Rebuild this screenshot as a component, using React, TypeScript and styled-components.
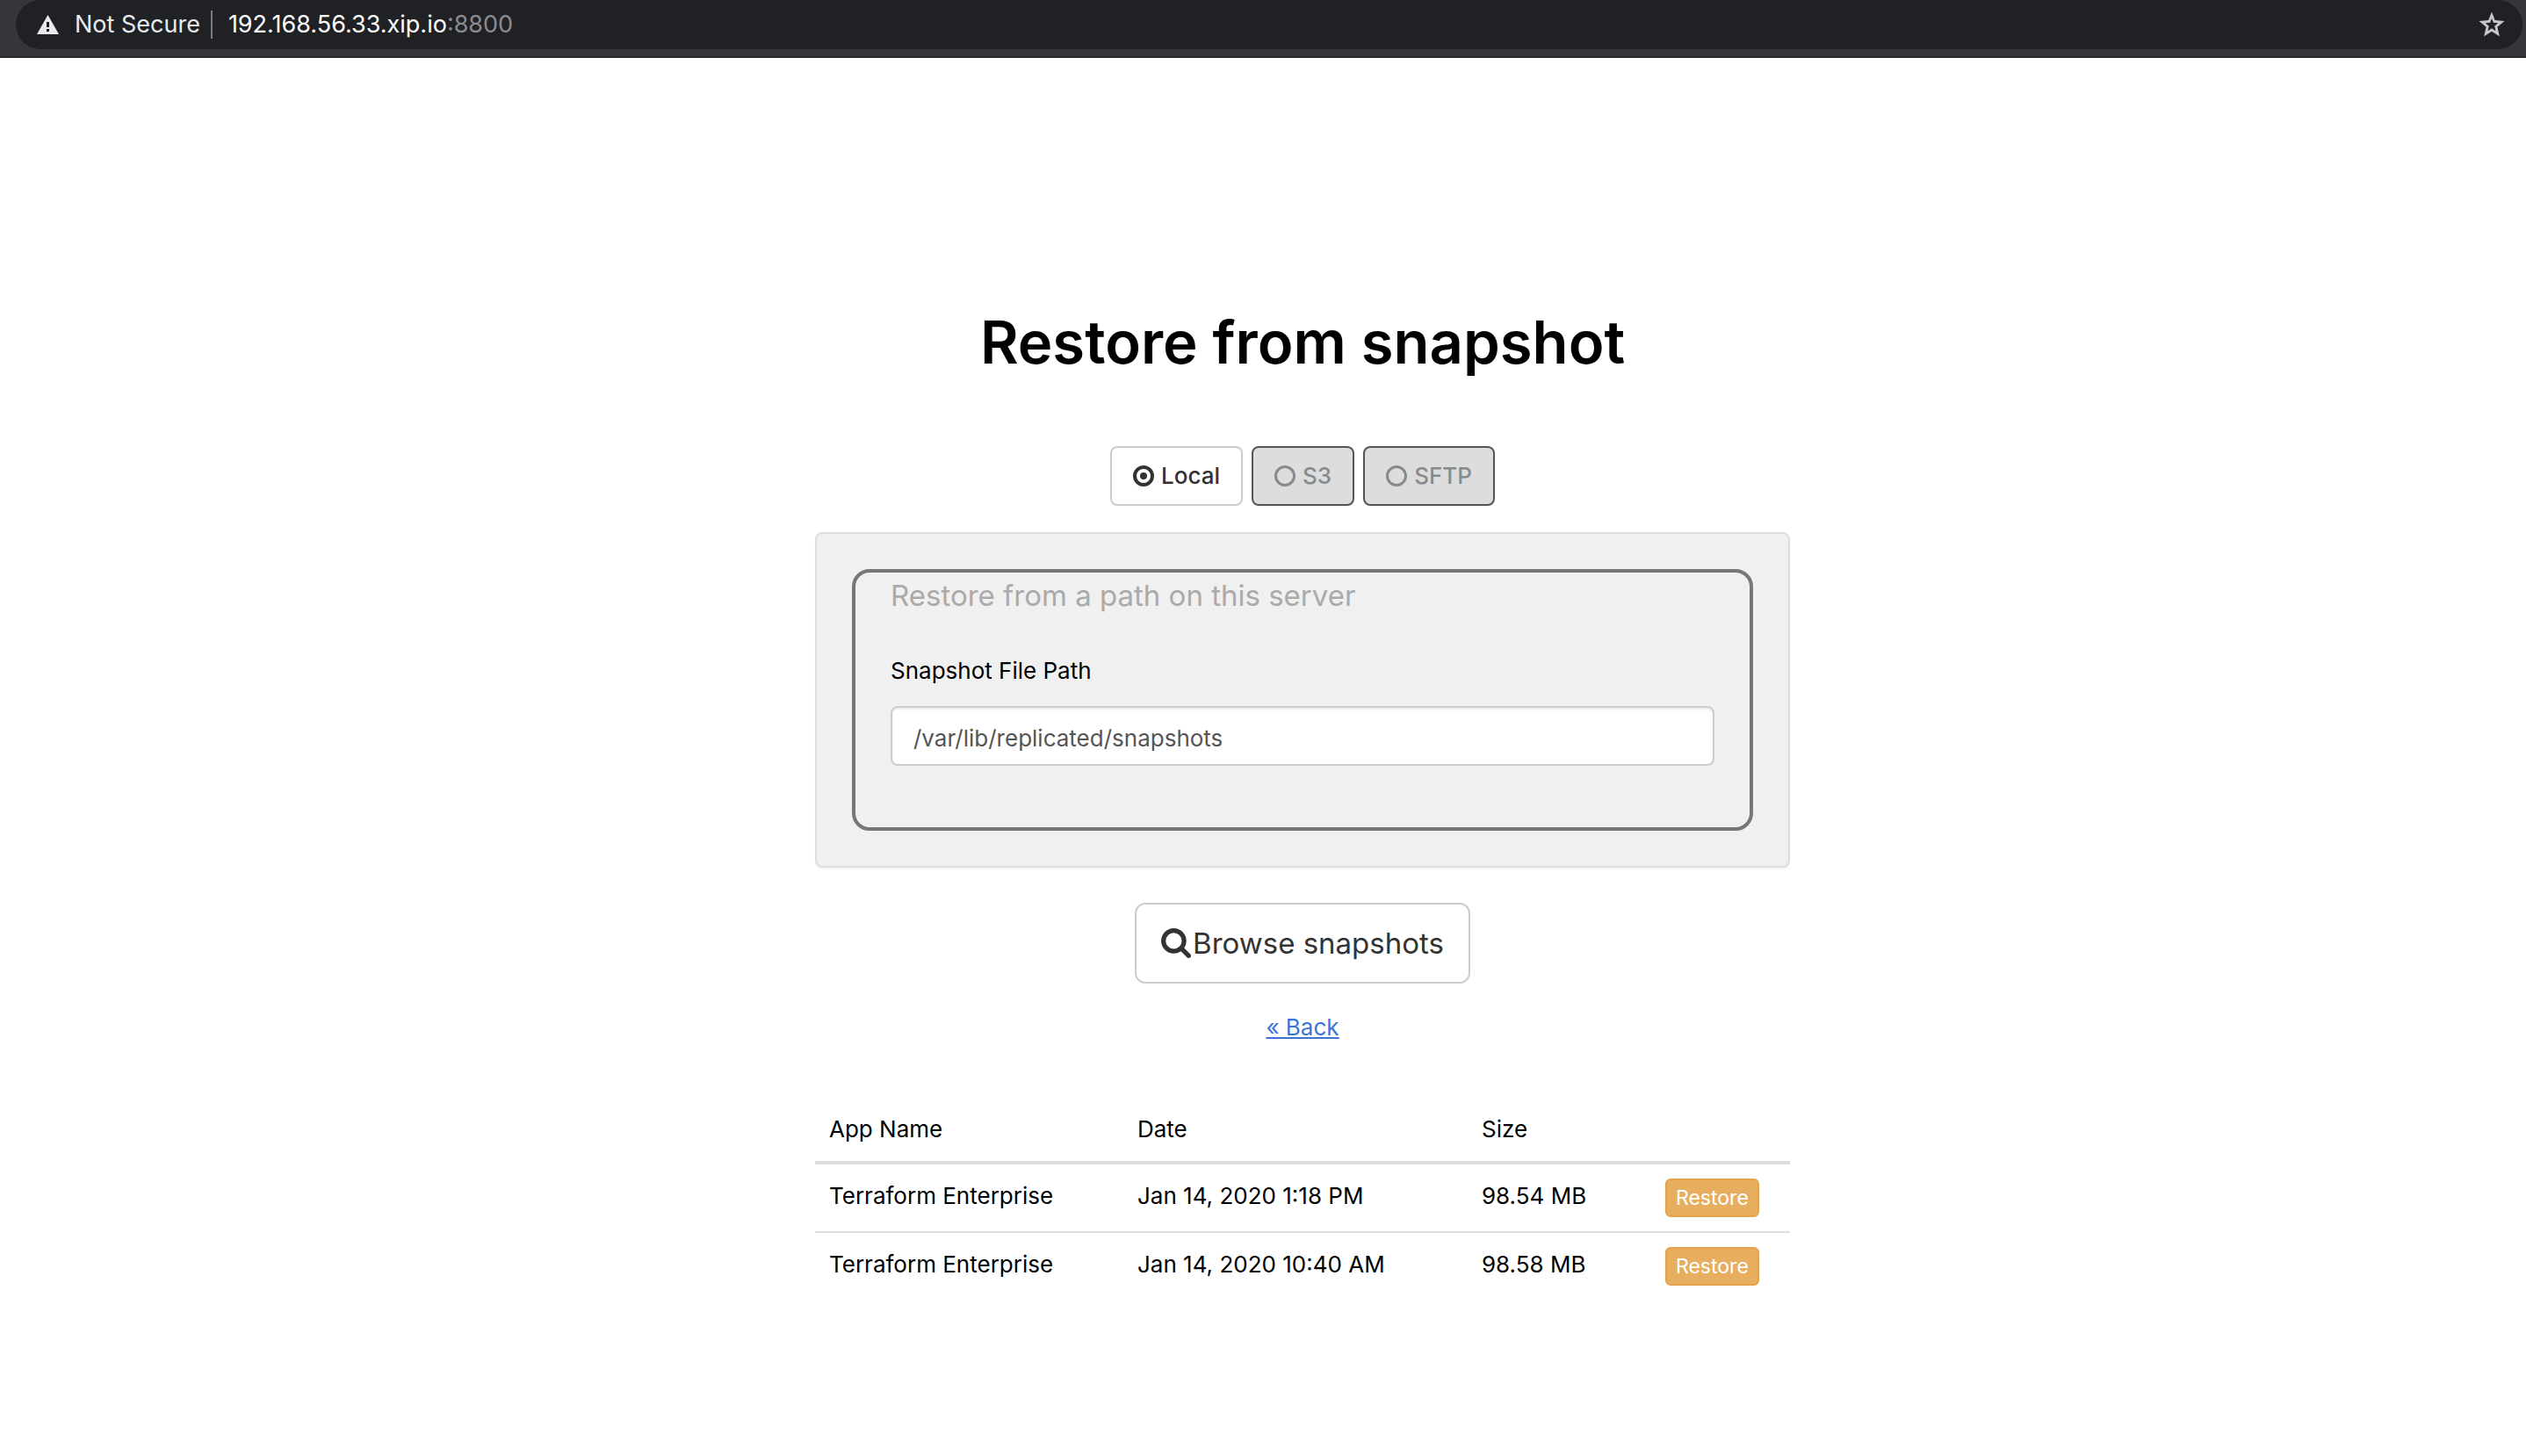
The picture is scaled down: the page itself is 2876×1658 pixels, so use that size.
import React, { useState } from "react";
import styled, { createGlobalStyle } from "styled-components";

const GlobalStyle = createGlobalStyle`
  *, *::before, *::after { box-sizing: border-box; }
  body {
    margin: 0;
    background: #fff;
    color: #000;
    font-family: Inter, "Liberation Sans", sans-serif;
    font-size: 26px;
    line-height: 40px;
  }
  input, button { font: inherit; }
`;

const AddressBar = styled.header`
  display: flex;
  height: 66px;
  padding: 0 4px 8px 18px;
  background: #35363a;
  border-bottom: 2px solid #28292b;
  font-size: 27px;
`;

const Omnibox = styled.div`
  flex: 1;
  display: flex;
  align-items: center;
  padding: 0 20px 0 24px;
  border-radius: 28px;
  background: #202124;
  color: #fff;
`;

const Security = styled.span`
  display: flex;
  align-items: center;
  gap: 18px;
  color: #e8eaed;
`;

const Divider = styled.span`
  width: 2px;
  height: 32px;
  margin: 0 18px 0 12px;
  background: #7b7c7f;
`;

const Port = styled.span`
  color: #8b8c8f;
`;

const StarButton = styled.button`
  display: flex;
  margin-left: auto;
  padding: 0;
  border: 0;
  background: none;
  color: #c6c7c8;
`;

const Main = styled.main`
  display: flex;
  flex-direction: column;
  align-items: center;
  padding: 284px 0 60px 90px;
`;

const Content = styled.div`
  display: flex;
  flex-direction: column;
  align-items: center;
  width: 100%;
  max-width: 1110px;
`;

const Title = styled.h1`
  margin: 0 0 78px;
  font-size: 67px;
  font-weight: 600;
  line-height: 80px;
`;

const Options = styled.div`
  display: flex;
  gap: 10px;
  margin-bottom: 30px;
`;

const Option = styled.label<{ $active: boolean }>`
  display: flex;
  align-items: center;
  gap: 8px;
  height: 68px;
  padding: 0 24px;
  border: 2px solid ${(p) => (p.$active ? "#ccc" : "#555")};
  border-radius: 8px;
  background: ${(p) => (p.$active ? "#fff" : "#ddd")};
  color: ${(p) => (p.$active ? "#333" : "#888b8d")};
  font-weight: 500;
`;

const Radio = styled.input`
  appearance: none;
  display: grid;
  place-items: center;
  width: 24px;
  height: 24px;
  margin: 0;
  border: 3px solid currentColor;
  border-radius: 50%;
  color: inherit;

  &:checked {
    border-width: 4px;
  }

  &:checked::before {
    content: "";
    width: 8px;
    height: 8px;
    border-radius: 50%;
    background: currentColor;
  }
`;

const Well = styled.section`
  width: 100%;
  margin-bottom: 40px;
  padding: 40px;
  border: 2px solid #ddd;
  border-radius: 8px;
  background: #f0f0f0;
  box-shadow: 0 2px 2px rgba(0, 0, 0, 0.05);
`;

const PathGroup = styled.div`
  display: flex;
  flex-direction: column;
  padding: 0 40px 70px;
  border: 4px solid #777;
  border-radius: 20px;
`;

const GroupTitle = styled.h2`
  margin: 0 0 40px;
  color: #aaa;
  font-size: 33px;
  font-weight: 400;
  line-height: 52px;
`;

const FieldLabel = styled.label`
  margin-bottom: 20px;
`;

const PathInput = styled.input`
  width: 100%;
  height: 68px;
  padding: 4px 24px 0;
  border: 2px solid #ccc;
  border-radius: 8px;
  background: #fff;
  box-shadow: inset 0 2px 2px rgba(0, 0, 0, 0.075);
  color: #555;
`;

const BrowseButton = styled.button`
  display: flex;
  align-items: center;
  gap: 2px;
  height: 92px;
  margin-bottom: 30px;
  padding: 0 28px;
  border: 2px solid #ccc;
  border-radius: 12px;
  background: #fff;
  color: #333;
  font-size: 33px;
`;

const BackLink = styled.a`
  margin-bottom: 60px;
  color: #3b73d9;
  text-decoration: underline;
`;

const Table = styled.table`
  width: 100%;
  border-collapse: collapse;
  table-layout: fixed;
`;

const Column = styled.col<{ $width?: number }>`
  width: ${(p) => (p.$width ? `${p.$width}px` : "auto")};
`;

const HeadCell = styled.th`
  padding: 16px;
  text-align: left;
  font-weight: 400;
`;

const Body = styled.tbody`
  border-top: 4px solid #ddd;
`;

const Row = styled.tr`
  & + & { border-top: 2px solid #ddd; }
`;

const Cell = styled.td`
  padding: 16px;
  vertical-align: top;
  white-space: nowrap;
`;

const RestoreButton = styled.button`
  display: block;
  height: 44px;
  padding: 0 10px;
  border: 2px solid #e5a34b;
  border-radius: 6px;
  background: #e8ae60;
  color: #fff;
  font-size: 23px;
  line-height: 40px;
`;

const WarningIcon = () => (
  <svg width="25" height="22" viewBox="0 0 25 22" aria-hidden="true">
    <path fill="currentColor" fillRule="evenodd" d="M12.5 0 25 22H0ZM11 8v6h3V8Zm0 8v3h3v-3Z" />
  </svg>
);

const StarIcon = () => (
  <svg width="30" height="30" viewBox="0 0 30 30" aria-hidden="true">
    <path
      fill="currentColor"
      fillRule="evenodd"
      d="M15 .5 18.7 10l10.8.9-8.1 6.8 2.5 10.8L15 22.8l-8.9 5.7 2.5-10.8L.5 10.9 11.3 10ZM15 8l-1.9 4.7-5.4.5 4.1 3.5-1.3 5.5 4.5-2.9 4.5 2.9-1.3-5.5 4.1-3.5-5.4-.5Z"
    />
  </svg>
);

const SearchIcon = () => (
  <svg width="34" height="34" viewBox="0 128 1664 1664" aria-hidden="true">
    <path
      fill="currentColor"
      d="M1152 832q0-185-131.5-316.5t-316.5-131.5-316.5 131.5-131.5 316.5 131.5 316.5 316.5 131.5 316.5-131.5 131.5-316.5zm512 832q0 52-38 90t-90 38q-54 0-90-38l-343-342q-179 124-399 124-143 0-273.5-55.5t-225-150-150-225-55.5-273.5 55.5-273.5 150-225 225-150 273.5-55.5 273.5 55.5 225 150 150 225 55.5 273.5q0 220-124 399l343 343q37 37 37 90z"
    />
  </svg>
);

const sources = ["Local", "S3", "SFTP"];

const snapshots = [
  { app: "Terraform Enterprise", date: "Jan 14, 2020 1:18 PM", size: "98.54 MB" },
  { app: "Terraform Enterprise", date: "Jan 14, 2020 10:40 AM", size: "98.58 MB" },
];

export default function App() {
  const [source, setSource] = useState("Local");
  const [path, setPath] = useState("/var/lib/replicated/snapshots");

  return (
    <>
      <GlobalStyle />
      <AddressBar>
        <Omnibox>
          <Security>
            <WarningIcon />
            Not Secure
          </Security>
          <Divider />
          <span>192.168.56.33.xip.io</span>
          <Port>:8800</Port>
          <StarButton type="button" aria-label="Bookmark this page">
            <StarIcon />
          </StarButton>
        </Omnibox>
      </AddressBar>
      <Main>
        <Content>
          <Title>Restore from snapshot</Title>
          <Options role="radiogroup" aria-label="Snapshot source">
            {sources.map((name) => (
              <Option key={name} $active={source === name}>
                <Radio
                  type="radio"
                  name="source"
                  value={name}
                  checked={source === name}
                  onChange={() => setSource(name)}
                />
                {name}
              </Option>
            ))}
          </Options>
          <Well>
            <PathGroup>
              <GroupTitle>Restore from a path on this server</GroupTitle>
              <FieldLabel htmlFor="snapshot-path">Snapshot File Path</FieldLabel>
              <PathInput
                id="snapshot-path"
                type="text"
                value={path}
                onChange={(e) => setPath(e.target.value)}
              />
            </PathGroup>
          </Well>
          <BrowseButton type="button">
            <SearchIcon />
            Browse snapshots
          </BrowseButton>
          <BackLink href="#back">« Back</BackLink>
          <Table>
            <colgroup>
              <Column $width={351} />
              <Column $width={392} />
              <Column $width={209} />
              <Column />
            </colgroup>
            <thead>
              <tr>
                <HeadCell>App Name</HeadCell>
                <HeadCell>Date</HeadCell>
                <HeadCell>Size</HeadCell>
                <HeadCell />
              </tr>
            </thead>
            <Body>
              {snapshots.map((s) => (
                <Row key={s.date}>
                  <Cell>{s.app}</Cell>
                  <Cell>{s.date}</Cell>
                  <Cell>{s.size}</Cell>
                  <Cell>
                    <RestoreButton type="button">Restore</RestoreButton>
                  </Cell>
                </Row>
              ))}
            </Body>
          </Table>
        </Content>
      </Main>
    </>
  );
}
